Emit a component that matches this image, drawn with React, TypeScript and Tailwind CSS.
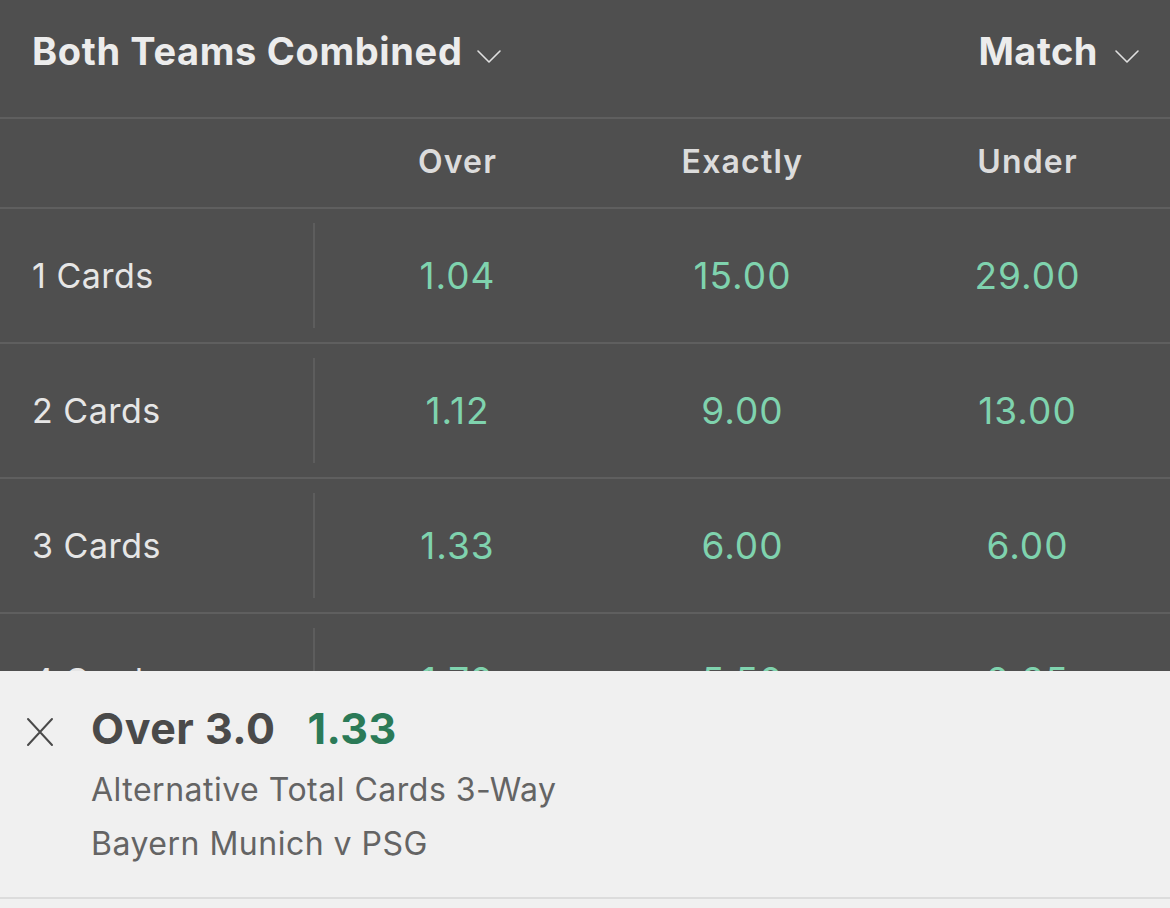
import React from "react";

const ROWS = [
  { label: "1 Cards", odds: ["1.04", "15.00", "29.00"] },
  { label: "2 Cards", odds: ["1.12", "9.00", "13.00"] },
  { label: "3 Cards", odds: ["1.33", "6.00", "6.00"] },
  { label: "4 Cards", odds: ["1.70", "5.50", "2.25"] },
];

function Chevron({ className }: { className?: string }) {
  return (
    <svg className={className} width="26" height="16" viewBox="0 0 26 16" fill="none" stroke="currentColor" strokeWidth="1.6" strokeLinecap="round" strokeLinejoin="round">
      <path d="M2 3l11 11L24 3" />
    </svg>
  );
}

export default function App() {
  return (
    <div
      className="relative h-[908px] w-[1170px] overflow-hidden bg-[#4f4f4f]"
      style={{ fontFamily: "Inter, 'Noto Sans', sans-serif" }}
    >
      {/* Header */}
      <div className="flex h-[119px] items-center justify-between border-b-2 border-[#5f5f5f] pl-8 pr-[30px] pb-[14px]">
        <div className="flex items-center gap-[14px] text-[38px] font-bold tracking-[0.65px] text-[#ececec]">
          Both Teams Combined
          <Chevron className="mt-2 text-[#e0e0e0]" />
        </div>
        <div className="flex items-center gap-4 text-[38px] font-bold tracking-[0.5px] text-[#ececec]">
          Match
          <Chevron className="mt-2 text-[#e0e0e0]" />
        </div>
      </div>

      {/* Column labels */}
      <div className="grid h-[90px] grid-cols-[315px_1fr_1fr_1fr] items-center border-b-2 border-[#5f5f5f] pb-[2px] text-[32px] font-semibold tracking-[1.2px] text-[#dcdcdc]">
        <div />
        <div className="text-center">Over</div>
        <div className="text-center">Exactly</div>
        <div className="text-center">Under</div>
      </div>

      {/* Rows */}
      {ROWS.map((row) => (
        <div
          key={row.label}
          className="grid h-[135px] grid-cols-[315px_1fr_1fr_1fr] items-center border-b-2 border-[#5f5f5f]"
        >
          <div className="flex h-full items-center py-[14px]">
            <div className="flex-1 pl-8 text-[34px] tracking-[0.5px] text-[#e6e6e6]">{row.label}</div>
            <div className="h-full w-[2px] bg-[#5d5d5d]" />
          </div>
          {row.odds.map((o, i) => (
            <div key={i} className="text-center text-[37px] tracking-[1px] text-[#7fd3ae]">
              {o}
            </div>
          ))}
        </div>
      ))}

      {/* Bet slip */}
      <div className="absolute inset-x-0 bottom-0 h-[237px] bg-[#f0f0f0]">
        <div className="flex h-[228px] items-start border-b-2 border-[#dcdcdc] pt-[30px]">
          <svg className="ml-[26px] mt-[16px]" width="28" height="30" viewBox="0 0 28 30" fill="none" stroke="#4a4a4a" strokeWidth="2" strokeLinecap="round">
            <path d="M2 2l24 26M26 2L2 28" />
          </svg>
          <div className="ml-[37px] flex flex-col">
            <div className="flex items-baseline gap-[32px] text-[43px] font-bold leading-[54px] tracking-[0.5px]">
              <span className="text-[#4a4a4a]">Over 3.0</span>
              <span className="text-[#2b7a57]">1.33</span>
            </div>
            <div className="mt-[13px] text-[32px] leading-[44px] tracking-[0.5px] text-[#646464]">
              Alternative Total Cards 3-Way
            </div>
            <div className="mt-[10px] text-[32px] leading-[44px] tracking-[0.5px] text-[#646464]">
              Bayern Munich v PSG
            </div>
          </div>
        </div>
      </div>
    </div>
  );
}
